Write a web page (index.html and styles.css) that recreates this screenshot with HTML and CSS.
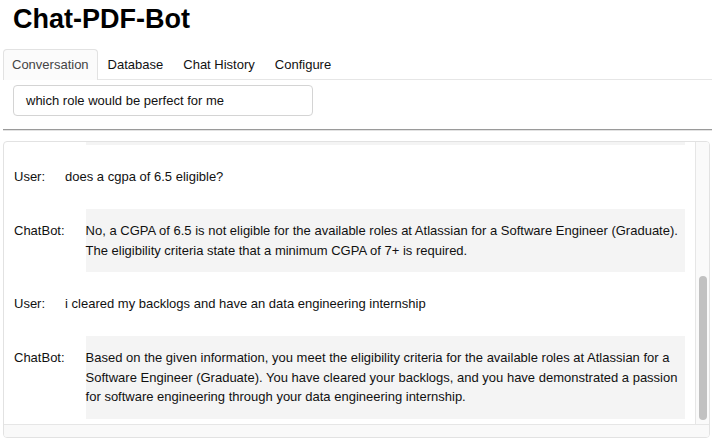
FILE: index.html
```html
<!DOCTYPE html>
<html lang="en">
<head>
<meta charset="utf-8">
<title>Chat-PDF-Bot</title>
<link rel="stylesheet" href="styles.css">
</head>
<body>
<main class="app">
  <h1 class="title">Chat-PDF-Bot</h1>
  <nav class="tabs">
    <div class="tab active">Conversation</div>
    <div class="tab">Database</div>
    <div class="tab">Chat History</div>
    <div class="tab">Configure</div>
  </nav>
  <div class="query">
    <div class="input">which role would be perfect for me</div>
  </div>
  <div class="divider"></div>
  <section class="chat">
    <div class="chat-body">
      <div class="viewport">
        <div class="tail"></div>
        <div class="row user">
          <span class="label">User:</span>
          <div class="msg">does a cgpa of 6.5 eligible?</div>
        </div>
        <div class="row bot">
          <span class="label">ChatBot:</span>
          <div class="msg">No, a CGPA of 6.5 is not eligible for the available roles at Atlassian for a Software Engineer (Graduate). The eligibility criteria state that a minimum CGPA of 7+ is required.</div>
        </div>
        <div class="row user">
          <span class="label">User:</span>
          <div class="msg">i cleared my backlogs and have an data engineering internship</div>
        </div>
        <div class="row bot">
          <span class="label">ChatBot:</span>
          <div class="msg">Based on the given information, you meet the eligibility criteria for the available roles at Atlassian for a Software Engineer (Graduate). You have cleared your backlogs, and you have demonstrated a passion for software engineering through your data engineering internship.</div>
        </div>
      </div>
      <div class="vscroll"><div class="thumb"></div></div>
    </div>
    <div class="hscroll"></div>
  </section>
</main>
</body>
</html>
```
FILE: styles.css
```css
* { box-sizing: border-box; }
html, body { margin: 0; padding: 0; background: #fff; }
body {
  font-family: "Liberation Sans", Arial, Helvetica, sans-serif;
  color: #111;
  font-size: 13px;
  overflow: hidden;
}
.app {
  padding: 4px 0 0 3px;
  width: 712px;
}
.title {
  margin: 0 0 15px 10px;
  font-size: 27px;
  line-height: 30px;
  font-weight: bold;
  color: #000;
}
.tabs {
  display: flex;
  border-bottom: 1px solid #e6e6e6;
  height: 31px;
}
.tab {
  height: 30px;
  line-height: 29px;
  padding: 0 9px;
  font-size: 13px;
  color: #111;
  border: 1px solid transparent;
  border-bottom: none;
}
.tab.active {
  color: #444;
  background: #fbfbfb;
  border-color: #e2e2e2;
  border-radius: 4px 4px 0 0;
  height: 31px;
  margin-bottom: -1px;
  padding: 0 8px;
}
.query {
  padding: 5px 0 0 10px;
}
.input {
  width: 300px;
  height: 31px;
  border: 1px solid #d4d4d4;
  border-radius: 4px;
  padding: 0 12px;
  line-height: 29px;
  font-size: 13px;
  color: #111;
}
.divider {
  margin-top: 13px;
  height: 2px;
  border-top: 1px solid #9a9a9a;
  border-bottom: 1px solid #e2e2e2;
}
.chat {
  margin-top: 10px;
  width: 707px;
  height: 297px;
  border: 1px solid #e2e2e2;
  border-radius: 4px;
  display: flex;
  flex-direction: column;
  overflow: hidden;
}
.chat-body {
  display: flex;
  height: 282px;
}
.viewport {
  flex: 1;
  overflow: hidden;
  padding: 0 10px;
  display: flex;
  flex-direction: column;
  gap: 12px;
}
.tail {
  height: 3px;
  margin-left: 72px;
  background: #f4f4f4;
  flex: none;
}
.row {
  display: flex;
  align-items: flex-start;
  line-height: 19.5px;
  flex: none;
}
.label {
  margin-right: 20px;
  white-space: nowrap;
}
.row.user .label,
.row.user .msg {
  padding: 10px 0 10.5px;
}
.row.bot .label {
  margin-right: 21px;
  padding: 12px 0;
}
.msg {
  flex: 1;
}
.row.bot .msg {
  background: #f4f4f4;
  padding: 12px 4px 12px 0;
}
.vscroll {
  width: 14px;
  flex: none;
  background: #fafafa;
  border-left: 1px solid #e6e6e6;
  padding: 134px 2px 3px 3px;
}
.thumb {
  width: 8px;
  height: 144px;
  border-radius: 4px;
  background: #c1c1c1;
}
.hscroll {
  flex: 1;
  background: #f9f9f9;
  border-top: 1px solid #e6e6e6;
}
```
